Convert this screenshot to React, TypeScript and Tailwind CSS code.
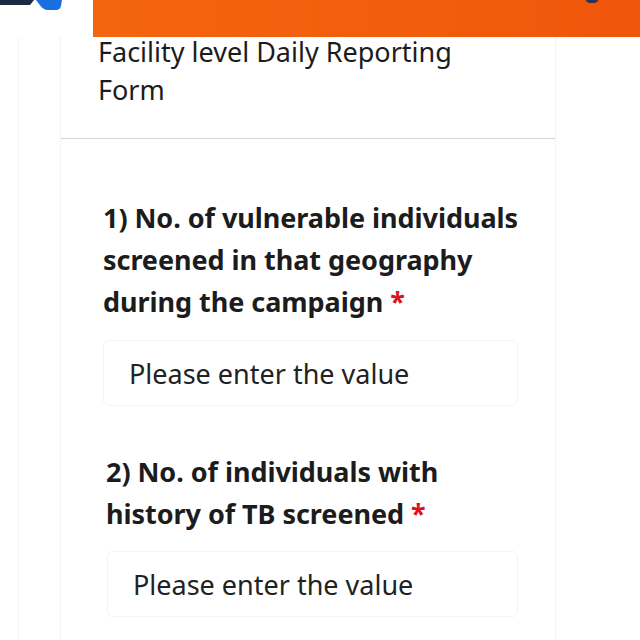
export default function App() {
  return (
    <div
      className="w-[640px] h-[640px] overflow-hidden bg-white text-[#1c1c1c]"
      style={{ fontFamily: '"Noto Sans", "Open Sans", sans-serif' }}
    >
      {/* Top bar */}
      <div className="flex h-[37px]">
        <div className="w-[93px] relative">
          <svg className="absolute left-0 top-0" width="64" height="12" viewBox="0 0 64 12">
            <path d="M0 0h34l-4 5H0z" fill="#1d2a44" />
            <path d="M36 0h26l-1 6q-1 4-5 4h-8q-5 0-9-6z" fill="#1a6fe0" />
          </svg>
        </div>
        <div className="flex-1 bg-gradient-to-r from-[#f46510] to-[#f0560a] relative">
          <div className="absolute left-[492px] -top-[8px] w-[14px] h-[11px] rounded-full bg-[#2c3550]" />
        </div>
      </div>

      <div className="flex">
        <div className="w-[18px]" />
        <div className="w-[42px] border-l border-gray-100" />
        <div className="w-[496px] border-x border-gray-100 h-[604px]">
          {/* Header */}
          <div className="pl-[37px] pb-[29px] border-b border-gray-300">
            <h1 className="-mt-[4px] text-[27px] leading-[38px] font-normal">
              Facility level Daily Reporting
              <br />
              Form
            </h1>
          </div>

          {/* Questions */}
          <div className="pl-[42px] pr-[37px] pt-[58px]">
            <label className="block whitespace-nowrap text-[27px] leading-[42px] font-bold tracking-[-0.05px]">
              1) No. of vulnerable individuals
              <br />
              screened in that geography
              <br />
              during the campaign <span className="text-[#e0101a]">*</span>
            </label>
            <input
              className="mt-[17px] w-full h-[66px] rounded-md border border-gray-100 pl-[25px] text-[27px] outline-none placeholder:text-[#222]"
              placeholder="Please enter the value"
            />

            <label className="block mt-[45px] pl-[3px] whitespace-nowrap text-[27px] leading-[42px] font-bold tracking-[-0.05px]">
              2) No. of individuals with
              <br />
              history of TB screened <span className="text-[#e0101a]">*</span>
            </label>
            <input
              className="mt-[16px] ml-[4px] w-[411px] h-[66px] rounded-md border border-gray-100 pl-[25px] text-[27px] outline-none placeholder:text-[#222]"
              placeholder="Please enter the value"
            />
          </div>
        </div>
      </div>
    </div>
  );
}
